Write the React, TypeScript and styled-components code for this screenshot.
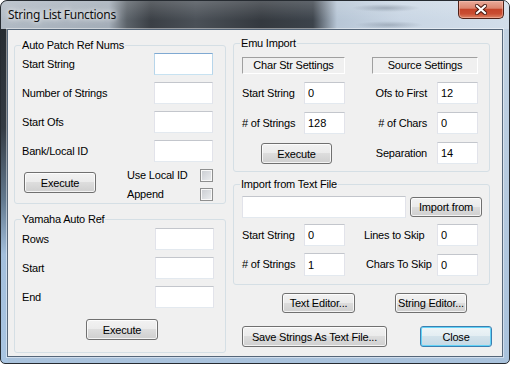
import React from 'react';
import styled, { createGlobalStyle } from 'styled-components';

const GlobalStyle = createGlobalStyle`
  html, body {
    margin: 0;
    padding: 0;
    background: #ffffff;
  }
  body {
    font-family: "Liberation Sans", Arial, sans-serif;
    font-size: 11px;
  }
`;

const uiFont = `11px "Liberation Sans", Arial, sans-serif`;

const Window = styled.div`
  box-sizing: border-box;
  width: 510px;
  height: 364px;
  display: flex;
  flex-direction: column;
  border: 1px solid #262b31;
  border-radius: 7px 7px 5px 5px;
  overflow: hidden;
  background:
    linear-gradient(180deg, #23282d 0%, #343b43 35%, #62798f 55%, #a3bfdc 70%, #a9c5e2 100%) left top / 7px 100% no-repeat,
    linear-gradient(180deg, #c4d3e2 0%, #a9c2dc 100%);
`;

const TitleBar = styled.div`
  flex: none;
  height: 28px;
  display: flex;
  align-items: flex-start;
  background:
    radial-gradient(ellipse 34px 4px at 385px 7px, rgba(80, 92, 108, 0.35), transparent),
    radial-gradient(ellipse 34px 4px at 388px 24px, rgba(80, 92, 108, 0.3), transparent),
    linear-gradient(180deg, rgba(255, 255, 255, 0.18), rgba(255, 255, 255, 0) 70%),
    linear-gradient(90deg, #b1bac4 0px, #a3adb8 108px, #5b6269 126px, #3a3f45 150px, #4a5057 195px, #34393f 260px, #3c434b 312px, #b7c6d6 336px, #c9d6e4 400px, #d2deea 510px);
`;

const Title = styled.span`
  margin: 6px 0 0 7px;
  font-family: "Noto Sans", "Open Sans", sans-serif;
  font-size: 12px;
  line-height: 16px;
  letter-spacing: -0.3px;
  color: #101010;
  text-shadow: 0 0 5px #ffffff, 0 0 9px rgba(255, 255, 255, 0.9);
`;

const CloseButton = styled.div`
  box-sizing: border-box;
  margin-left: auto;
  margin-right: 5px;
  width: 46px;
  height: 18px;
  display: flex;
  align-items: center;
  justify-content: center;
  border: 1px solid #4e2017;
  border-top: none;
  border-radius: 0 0 5px 5px;
  background: linear-gradient(180deg, #e9aa9a 0%, #dc8670 42%, #c5442a 50%, #c94d32 75%, #dd8465 100%);
  box-shadow: inset 0 0 0 1px rgba(255, 205, 190, 0.45);
`;

const Client = styled.div`
  flex: 1;
  margin: 0 6px 6px;
  border: 1px solid #56677a;
  box-shadow: 0 0 0 1px rgba(255, 255, 255, 0.45);
  background: #f0f0f0;
  display: grid;
  grid-template-columns: 212px 259px;
  column-gap: 7px;
  align-content: start;
  padding-left: 6px;
  color: #000;
  font: ${uiFont};
  letter-spacing: -0.2px;
`;

const Column = styled.div<{ $top: number }>`
  display: flex;
  flex-direction: column;
  padding-top: ${(p) => p.$top}px;
`;

const Group = styled.div<{ $w: number; $mt?: number }>`
  box-sizing: border-box;
  width: ${(p) => p.$w}px;
  margin-top: ${(p) => p.$mt ?? 0}px;
  border: 1px solid #d5dfe5;
  border-radius: 3px;
  display: flex;
  flex-direction: column;
`;

const Caption = styled.div`
  align-self: flex-start;
  margin: -7px 0 0 6px;
  padding: 0 1px;
  line-height: 13px;
  background: #f0f0f0;
`;

const GroupBody = styled.div<{ $pad: string }>`
  display: flex;
  flex-direction: column;
  padding: ${(p) => p.$pad};
`;

const FieldGrid = styled.div`
  display: grid;
  grid-template-columns: 1fr 59px;
  grid-auto-rows: 22px;
  row-gap: 7px;
  align-items: center;
`;

const FormGrid = styled.div<{ $rows: string; $mt?: number }>`
  display: grid;
  grid-template-columns: 62px 41px 92px 41px;
  grid-template-rows: ${(p) => p.$rows};
  row-gap: ${(p) => (p.$mt !== undefined ? 7 : 8)}px;
  margin-top: ${(p) => p.$mt ?? 0}px;
  align-items: center;
`;

const Label = styled.span<{ $right?: boolean; $indent?: number }>`
  white-space: nowrap;
  line-height: 13px;
  text-align: ${(p) => (p.$right ? 'right' : 'left')};
  padding-right: ${(p) => (p.$right ? 10 : 0)}px;
  padding-left: ${(p) => p.$indent ?? 0}px;
`;

const TextBox = styled.input<{ $w?: number; $h?: number; $hot?: boolean }>`
  box-sizing: border-box;
  width: ${(p) => (p.$w ? `${p.$w}px` : '100%')};
  height: ${(p) => p.$h ?? 22}px;
  margin: 0;
  padding: 0 3px;
  font: ${uiFont};
  color: #000;
  background: #fff;
  outline: none;
  border: 1px solid;
  border-color: ${(p) =>
    p.$hot ? '#7fa9d2 #b7d5ea #c7e2f1 #b7d5ea' : '#c3c6cc #e2e3ea #e3e9ef #e2e3ea'};
`;

const Button = styled.button<{ $w: number; $h?: number; $default?: boolean; $ml?: number; $mt?: number }>`
  box-sizing: border-box;
  flex: none;
  width: ${(p) => p.$w}px;
  height: ${(p) => p.$h ?? 21}px;
  margin: ${(p) => p.$mt ?? 0}px 0 0 ${(p) => p.$ml ?? 0}px;
  padding: 0;
  font: ${uiFont};
  letter-spacing: -0.2px;
  color: #000;
  border: 1px solid ${(p) => (p.$default ? '#3c7fb1' : '#707070')};
  border-radius: 3px;
  background: ${(p) =>
    p.$default
      ? 'linear-gradient(180deg, #eef5f8 0%, #e3edf2 49%, #d2e2eb 50%, #c5d9e5 100%)'
      : 'linear-gradient(180deg, #f2f2f2 0%, #ebebeb 49%, #dddddd 50%, #cfcfcf 100%)'};
  box-shadow: inset 0 0 0 1px ${(p) => (p.$default ? '#62d3f7' : 'rgba(255, 255, 255, 0.75)')};
`;

const BottomRow = styled.div`
  display: flex;
  align-items: flex-start;
  margin-top: 7px;
`;

const CheckGrid = styled.div`
  margin-left: auto;
  width: 86px;
  display: grid;
  grid-template-columns: 1fr 13px;
  grid-auto-rows: 13px;
  row-gap: 6px;
  align-items: center;
`;

const CheckBox = styled.span`
  box-sizing: border-box;
  width: 13px;
  height: 13px;
  border: 1px solid #8e8f8f;
  background: linear-gradient(135deg, #c9ccd1 0%, #eceef0 100%);
  box-shadow: inset 0 0 0 1px #f8f8f8;
`;

const Sunken = styled.div<{ $ml?: number }>`
  box-sizing: border-box;
  height: 17px;
  margin-left: ${(p) => p.$ml ?? 0}px;
  display: flex;
  align-items: center;
  justify-content: center;
  border: 1px solid;
  border-color: #a0a0a0 #ffffff #ffffff #a0a0a0;
  line-height: 13px;
`;

const FileRow = styled.div`
  display: flex;
  align-items: center;
`;

const ButtonRow = styled.div<{ $mt: number; $pl: number }>`
  display: flex;
  align-items: center;
  margin-top: ${(p) => p.$mt}px;
  padding-left: ${(p) => p.$pl}px;
`;

const CloseGlyph: React.FC = () => (
  <svg width="12" height="11" viewBox="0 0 12 11">
    <path d="M2 2 L10 9 M10 2 L2 9" stroke="#4a1a12" strokeWidth="4.2" strokeLinecap="square" />
    <path d="M2 2 L10 9 M10 2 L2 9" stroke="#ffffff" strokeWidth="2.2" strokeLinecap="square" />
  </svg>
);

const App: React.FC = () => {
  return (
    <>
      <GlobalStyle />
      <Window>
        <TitleBar>
          <Title>String List Functions</Title>
          <CloseButton>
            <CloseGlyph />
          </CloseButton>
        </TitleBar>

        <Client>
          <Column $top={15}>
            <Group $w={212}>
              <Caption>Auto Patch Ref Nums</Caption>
              <GroupBody $pad="1px 12px 2px 7px">
                <FieldGrid>
                  <Label>Start String</Label>
                  <TextBox $hot readOnly value="" />
                  <Label>Number of Strings</Label>
                  <TextBox readOnly value="" />
                  <Label>Start Ofs</Label>
                  <TextBox readOnly value="" />
                  <Label>Bank/Local ID</Label>
                  <TextBox readOnly value="" />
                </FieldGrid>
                <BottomRow>
                  <Button $w={72} $mt={3} $ml={2}>Execute</Button>
                  <CheckGrid>
                    <Label>Use Local ID</Label>
                    <CheckBox />
                    <Label>Append</Label>
                    <CheckBox />
                  </CheckGrid>
                </BottomRow>
              </GroupBody>
            </Group>

            <Group $w={212} $mt={15}>
              <Caption>Yamaha Auto Ref</Caption>
              <GroupBody $pad="2px 11px 12px 7px">
                <FieldGrid>
                  <Label>Rows</Label>
                  <TextBox readOnly value="" />
                  <Label>Start</Label>
                  <TextBox readOnly value="" />
                  <Label>End</Label>
                  <TextBox readOnly value="" />
                </FieldGrid>
                <Button $w={72} $mt={11} $ml={64}>Execute</Button>
              </GroupBody>
            </Group>
          </Column>

          <Column $top={13}>
            <Group $w={257}>
              <Caption>Emu Import</Caption>
              <GroupBody $pad="7px 0 7px 8px">
                <FormGrid $rows="17px 22px 22px 22px">
                  <Sunken style={{ gridColumn: '1 / 3' }}>Char Str Settings</Sunken>
                  <Sunken $ml={27} style={{ gridColumn: '3 / 5' }}>Source Settings</Sunken>

                  <Label>Start String</Label>
                  <TextBox readOnly value="0" />
                  <Label $right>Ofs to First</Label>
                  <TextBox readOnly value="12" />

                  <Label># of Strings</Label>
                  <TextBox readOnly value="128" />
                  <Label $right># of Chars</Label>
                  <TextBox readOnly value="0" />

                  <Button $w={71} $h={21} $ml={19} $mt={1} style={{ gridColumn: '1 / 3', alignSelf: 'start' }}>
                    Execute
                  </Button>
                  <Label $right>Separation</Label>
                  <TextBox readOnly value="14" />
                </FormGrid>
              </GroupBody>
            </Group>

            <Group $w={257} $mt={12}>
              <Caption>Import from Text File</Caption>
              <GroupBody $pad="5px 7px 8px 8px">
                <FileRow>
                  <TextBox $w={164} readOnly value="" />
                  <Button $w={72} $h={20} $ml={4}>Import from</Button>
                </FileRow>
                <FormGrid $rows="22px 23px" $mt={6}>
                  <Label>Start String</Label>
                  <TextBox readOnly value="0" />
                  <Label $indent={19}>Lines to Skip</Label>
                  <TextBox readOnly value="0" />

                  <Label># of Strings</Label>
                  <TextBox $h={23} readOnly value="1" />
                  <Label $indent={21}>Chars To Skip</Label>
                  <TextBox readOnly value="0" />
                </FormGrid>
              </GroupBody>
            </Group>

            <ButtonRow $mt={8} $pl={49}>
              <Button $w={73} $h={20}>Text Editor...</Button>
              <Button $w={72} $h={20} $ml={40}>String Editor...</Button>
            </ButtonRow>
            <ButtonRow $mt={13} $pl={9}>
              <Button $w={145}>Save Strings As Text File...</Button>
              <Button $w={72} $default style={{ marginLeft: 'auto' }}>Close</Button>
            </ButtonRow>
          </Column>
        </Client>
      </Window>
    </>
  );
};

export default App;
